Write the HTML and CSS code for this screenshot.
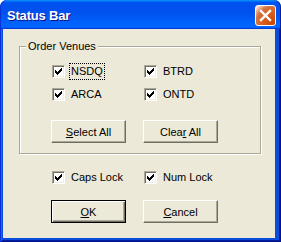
FILE: index.html
```html
<!DOCTYPE html>
<html>
<head>
<meta charset="utf-8">
<link rel="stylesheet" href="styles.css">
</head>
<body>
<div class="window">
  <div class="titlebar">
    <span class="title">Status Bar</span>
    <span class="close">
      <svg width="19" height="19" viewBox="0 0 19 19"><path d="M5 5L14 14M14 5L5 14" stroke="#fff" stroke-width="2.4" stroke-linecap="square"/></svg>
    </span>
  </div>
  <div class="frame">
    <div class="client">
      <div class="group">
        <span class="legend">Order Venues</span>
        <div class="grid">
          <label class="check"><span class="cb"><svg width="11" height="11" viewBox="0 0 11 11"><path d="M8 2h1v1H8zM7 3h2v1H7zM2 4h1v1H2zM6 4h3v1H6zM2 5h2v1H2zM5 5h3v1H5zM2 6h5v1H2zM3 7h3v1H3zM4 8h1v1H4z" fill="#000"/></svg></span><span class="txt focus">NSDQ</span></label>
          <label class="check"><span class="cb"><svg width="11" height="11" viewBox="0 0 11 11"><path d="M8 2h1v1H8zM7 3h2v1H7zM2 4h1v1H2zM6 4h3v1H6zM2 5h2v1H2zM5 5h3v1H5zM2 6h5v1H2zM3 7h3v1H3zM4 8h1v1H4z" fill="#000"/></svg></span><span class="txt">BTRD</span></label>
          <label class="check"><span class="cb"><svg width="11" height="11" viewBox="0 0 11 11"><path d="M8 2h1v1H8zM7 3h2v1H7zM2 4h1v1H2zM6 4h3v1H6zM2 5h2v1H2zM5 5h3v1H5zM2 6h5v1H2zM3 7h3v1H3zM4 8h1v1H4z" fill="#000"/></svg></span><span class="txt">ARCA</span></label>
          <label class="check"><span class="cb"><svg width="11" height="11" viewBox="0 0 11 11"><path d="M8 2h1v1H8zM7 3h2v1H7zM2 4h1v1H2zM6 4h3v1H6zM2 5h2v1H2zM5 5h3v1H5zM2 6h5v1H2zM3 7h3v1H3zM4 8h1v1H4z" fill="#000"/></svg></span><span class="txt">ONTD</span></label>
        </div>
        <div class="buttons group-buttons">
          <button class="btn"><u>S</u>elect All</button>
          <button class="btn">Clea<u>r</u> All</button>
        </div>
      </div>
      <div class="grid locks">
        <label class="check"><span class="cb"><svg width="11" height="11" viewBox="0 0 11 11"><path d="M8 2h1v1H8zM7 3h2v1H7zM2 4h1v1H2zM6 4h3v1H6zM2 5h2v1H2zM5 5h3v1H5zM2 6h5v1H2zM3 7h3v1H3zM4 8h1v1H4z" fill="#000"/></svg></span><span class="txt">Caps Lock</span></label>
        <label class="check"><span class="cb"><svg width="11" height="11" viewBox="0 0 11 11"><path d="M8 2h1v1H8zM7 3h2v1H7zM2 4h1v1H2zM6 4h3v1H6zM2 5h2v1H2zM5 5h3v1H5zM2 6h5v1H2zM3 7h3v1H3zM4 8h1v1H4z" fill="#000"/></svg></span><span class="txt">Num Lock</span></label>
      </div>
      <div class="buttons bottom-buttons">
        <button class="btn default"><u>O</u>K</button>
        <button class="btn"><u>C</u>ancel</button>
      </div>
    </div>
  </div>
</div>
</body>
</html>
```
FILE: styles.css
```css
html, body {
  margin: 0;
  padding: 0;
  background: #ffffff;
}
.window {
  width: 281px;
  height: 242px;
  display: flex;
  flex-direction: column;
  font-family: "Liberation Sans", Arial, sans-serif;
  font-size: 11px;
  color: #000;
}
.titlebar {
  height: 29px;
  box-sizing: border-box;
  display: flex;
  justify-content: space-between;
  align-items: flex-start;
  padding: 5px 5px 0 7px;
  border-radius: 7px 7px 0 0;
  background: linear-gradient(180deg, #0997ff, #0053ee 8%, #0050ee 40%, #0066ff 88%, #0066ff 93%, #005bff 95%, #003dd7 96%, #003dd7);
  box-shadow: inset 1px 0 #0831d9, inset -1px 0 #001ea0;
}
.title {
  font-weight: bold;
  font-size: 13px;
  color: #fff;
  line-height: 21px;
  letter-spacing: -0.2px;
  text-shadow: 1px 1px #0f1089;
}
.close {
  width: 21px;
  height: 21px;
  box-sizing: border-box;
  border: 1px solid #fff;
  border-radius: 3px;
  background: radial-gradient(circle at 90% 90%, #cc4600 0%, #dc6527 55%, #cd7546 70%, #ffccb2 90%, #fff 100%);
  display: flex;
}
.frame {
  flex: 1;
  display: flex;
  padding: 0 6px 4px 3px;
  background: #0a4ddc;
  box-shadow: inset 1px 0 #0831d9, inset -1px -1px #00138c, inset 2px 0 #166aee, inset -2px -2px #001ea0;
}
.client {
  flex: 1;
  background: #ece9d8;
  padding: 17px 0 0 16px;
  box-sizing: border-box;
  display: flex;
  flex-direction: column;
}
.group {
  position: relative;
  width: 242px;
  height: 108px;
  box-sizing: border-box;
  border: 1px solid #aca899;
  box-shadow: inset 1px 1px #fff, 1px 1px #fff;
  padding: 18px 0 0 32px;
}
.legend {
  position: absolute;
  left: 6px;
  top: -7px;
  padding: 0 2px;
  background: #ece9d8;
  line-height: 13px;
}
.grid {
  display: grid;
  grid-template-columns: 92px auto;
  row-gap: 10px;
}
.check {
  display: flex;
  align-items: center;
  height: 13px;
}
.cb {
  width: 13px;
  height: 13px;
  box-sizing: border-box;
  border: 1px solid;
  border-color: #aca899 #fff #fff #aca899;
  box-shadow: inset 1px 1px #716f64, inset -1px -1px #f1efe2;
  background: #fff;
  display: block;
}
.cb svg {
  display: block;
  shape-rendering: crispEdges;
}
.txt {
  margin-left: 5px;
  padding: 1px 1px;
  line-height: 13px;
}
.focus {
  outline: 1px dotted #000;
  outline-offset: 0;
}
.buttons {
  display: flex;
  gap: 17px;
}
.group-buttons {
  margin: 19px 0 0 -1px;
}
.btn {
  width: 75px;
  height: 23px;
  box-sizing: border-box;
  padding: 0;
  margin: 0;
  font-family: "Liberation Sans", Arial, sans-serif;
  font-size: 11px;
  color: #000;
  background: #ece9d8;
  border: 1px solid;
  border-color: #fff #716f64 #716f64 #fff;
  box-shadow: inset -1px -1px #aca899;
  border-radius: 0;
}
.btn u {
  text-underline-offset: 1px;
}
.btn.default {
  border: 1px solid #000;
  box-shadow: inset 1px 1px #fff, inset -1px -1px #716f64, inset -2px -2px #aca899;
}
.locks {
  margin: 17px 0 0 33px;
}
.bottom-buttons {
  margin: 16px 0 0 32px;
}
```
